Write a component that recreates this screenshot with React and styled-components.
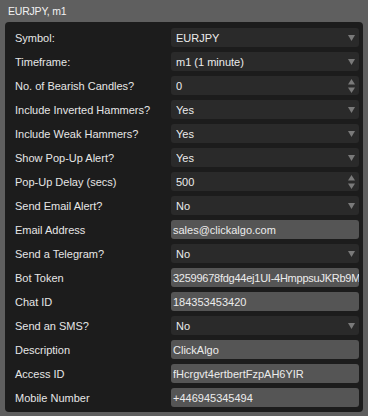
import React from "react";
import styled, { createGlobalStyle } from "styled-components";

const GlobalStyle = createGlobalStyle`
  html, body {
    margin: 0;
    padding: 0;
    background: #5f5f5f;
    font-family: "Liberation Sans", Arial, sans-serif;
  }
`;

const Window = styled.div`
  width: 368px;
  height: 416px;
  background: #5f5f5f;
  box-sizing: border-box;
`;

const Title = styled.div`
  height: 22px;
  line-height: 22px;
  padding-left: 8px;
  font-size: 10.5px;
  letter-spacing: -0.2px;
  color: #f2f2f2;
`;

const Panel = styled.div`
  margin: 0 5px;
  background: #1c1c1c;
  border-radius: 4px;
  padding: 6px 4px 5px 10px;
  display: grid;
  grid-template-columns: 156px 188px;
  row-gap: 5px;
`;

const Label = styled.div`
  height: 19px;
  display: flex;
  align-items: center;
  font-size: 11px;
  color: #e6e6e6;
  white-space: nowrap;
`;

const Field = styled.div`
  height: 19px;
  border-radius: 3px;
  background: ${(p) => (p.$text ? "#555555" : "#2a2a2a")};
  display: flex;
  align-items: center;
  padding: ${(p) => (p.$text ? "0 0 0 2px" : "0 0 0 5px")};
  overflow: hidden;
`;

const Value = styled.span`
  flex: 1;
  font-size: 11px;
  color: #ececec;
  white-space: nowrap;
  overflow: hidden;
  letter-spacing: ${(p) => (p.$tight ? "-0.25px" : "0")};
`;

const Arrow = styled.svg`
  flex: none;
  width: 7px;
  height: 6px;
  margin: 0 4px;
`;

const Spinner = styled.svg`
  flex: none;
  width: 7px;
  height: 14px;
  margin: 0 4px;
`;

const rows = [
  ["Symbol:", "select", "EURJPY"],
  ["Timeframe:", "select", "m1 (1 minute)"],
  ["No. of Bearish Candles?", "number", "0"],
  ["Include Inverted Hammers?", "select", "Yes"],
  ["Include Weak Hammers?", "select", "Yes"],
  ["Show Pop-Up Alert?", "select", "Yes"],
  ["Pop-Up Delay (secs)", "number", "500"],
  ["Send Email Alert?", "select", "No"],
  ["Email Address", "text", "sales@clickalgo.com"],
  ["Send a Telegram?", "select", "No"],
  ["Bot Token", "text", "32599678fdg44ej1UI-4HmppsuJKRb9M"],
  ["Chat ID", "text", "184353453420"],
  ["Send an SMS?", "select", "No"],
  ["Description", "text", "ClickAlgo"],
  ["Access ID", "text", "fHcrgvt4ertbertFzpAH6YIR"],
  ["Mobile Number", "text", "+446945345494"],
];

function Control({ kind, value }) {
  return (
    <Field $text={kind === "text"}>
      <Value $tight={value.length > 28}>{value}</Value>
      {kind === "select" && (
        <Arrow viewBox="0 0 7 6">
          <path d="M0 0H7L3.5 6Z" fill="#7a7a7a" />
        </Arrow>
      )}
      {kind === "number" && (
        <Spinner viewBox="0 0 7 14">
          <path d="M3.5 0L7 5.5H0Z" fill="#7a7a7a" />
          <path d="M0 8.5H7L3.5 14Z" fill="#7a7a7a" />
        </Spinner>
      )}
    </Field>
  );
}

export default function App() {
  return (
    <>
      <GlobalStyle />
      <Window>
        <Title>EURJPY, m1</Title>
        <Panel>
          {rows.map(([label, kind, value]) => (
            <React.Fragment key={label}>
              <Label>{label}</Label>
              <Control kind={kind} value={value} />
            </React.Fragment>
          ))}
        </Panel>
      </Window>
    </>
  );
}
